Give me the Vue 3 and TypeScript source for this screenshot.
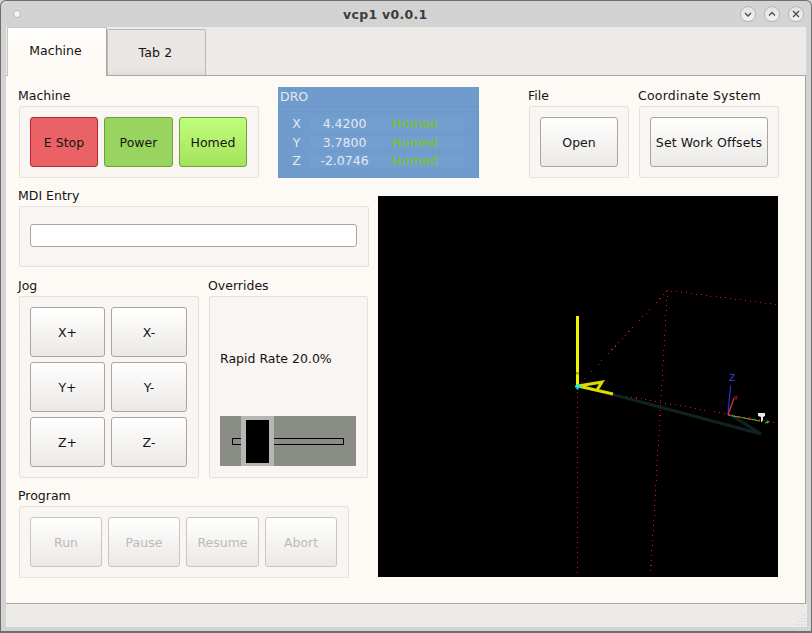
<template>
  <div class="window">
    <header class="titlebar">
      <span class="menu-dot"></span>
      <span class="title">vcp1 v0.0.1</span>
      <div class="wm-buttons">
        <span class="wm-btn">
          <svg width="10" height="10" viewBox="0 0 10 10"><path d="M2 4l3 3 3-3" /></svg>
        </span>
        <span class="wm-btn">
          <svg width="10" height="10" viewBox="0 0 10 10"><path d="M2 6.5l3-3 3 3" /></svg>
        </span>
        <span class="wm-btn">
          <svg width="10" height="10" viewBox="0 0 10 10"><path d="M2 2l6 6M8 2l-6 6" /></svg>
        </span>
      </div>
    </header>

    <div class="tabbar">
      <div class="tab active">Machine</div>
      <div class="tab">Tab 2</div>
    </div>

    <main class="pane">
      <div class="top-row">
        <section class="group machine-group">
          <div class="group-label">Machine</div>
          <div class="box btn-row machine-btns">
            <button class="btn estop">E Stop</button>
            <button class="btn power">Power</button>
            <button class="btn homed">Homed</button>
          </div>
        </section>

        <section class="dro">
          <div class="dro-title">DRO</div>
          <div class="dro-body">
            <div v-for="axis in axes" :key="axis.name" class="dro-row">
              <span class="dro-axis">{{ axis.name }}</span>
              <span class="dro-value">{{ axis.value }}</span>
              <span class="dro-state">Homed</span>
            </div>
          </div>
        </section>

        <section class="group file-group">
          <div class="group-label">File</div>
          <div class="box btn-row">
            <button class="btn">Open</button>
          </div>
        </section>

        <section class="group coord-group">
          <div class="group-label wide-text">Coordinate System</div>
          <div class="box btn-row">
            <button class="btn offsets">Set Work Offsets</button>
          </div>
        </section>
      </div>

      <div class="main-row">
        <div class="left-col">
          <section class="group">
            <div class="group-label">MDI Entry</div>
            <div class="box mdi-box">
              <input class="mdi-input" type="text" />
            </div>
          </section>

          <div class="jog-row">
            <section class="group jog-group">
              <div class="group-label">Jog</div>
              <div class="box jog-grid">
                <button v-for="j in jogButtons" :key="j" class="btn">{{ j }}</button>
              </div>
            </section>

            <section class="group override-group">
              <div class="group-label">Overrides</div>
              <div class="box override-box">
                <div class="rate-label">Rapid Rate {{ rapidRate.toFixed(1) }}%</div>
                <div class="slider">
                  <div class="slider-track"></div>
                  <div class="slider-handle" :style="{ left: handleLeft + 'px' }">
                    <div class="slider-knob"></div>
                  </div>
                </div>
              </div>
            </section>
          </div>

          <section class="group program-group">
            <div class="group-label">Program</div>
            <div class="box btn-row program-btns">
              <button v-for="p in programButtons" :key="p" class="btn" disabled>{{ p }}</button>
            </div>
          </section>
        </div>

        <div class="viewport">
          <svg width="400" height="381" viewBox="0 0 400 381">
            <!-- machine limits -->
            <g class="dots">
              <path d="M199.5 190.5L289.5 94.5L398 108.5" />
              <path d="M289.5 94.5L272.5 378" />
              <path d="M199.5 190.5V379" />
              <path d="M233 197.5L397 226.5" />
            </g>
            <!-- tool path shadow -->
            <path d="M233 198L383 238L353 219" fill="none" stroke="#0f2322" stroke-width="3" />
            <!-- program -->
            <path d="M199.5 120V191" fill="none" stroke="#f2f200" stroke-width="3" />
            <path d="M198 176H201V178.5H198Z" fill="#a8a800" />
            <path d="M200 190L224 186L219 194M200 190L235 198" fill="none" stroke="#dcdc00" stroke-width="3" />
            <path d="M197 190.5H204M199.5 188V193.5" stroke="#19e8e8" stroke-width="2" />
            <!-- axes widget -->
            <path d="M352.5 190L350 219" stroke="#3030e0" stroke-width="1.2" fill="none" />
            <path d="M350 219L356 202" stroke="#e03838" stroke-width="1.2" fill="none" />
            <path d="M350 219L382 225" stroke="#30d830" stroke-width="1.2" fill="none" />
            <path d="M350 219L382 225" stroke="#e02020" stroke-width="1.2" stroke-dasharray="4 6" fill="none" />
            <text x="351" y="185" class="axis-z">Z</text>
            <text x="356" y="204" class="axis-y">Y</text>
            <path d="M380 217h7v3l-2 1v3l-1 2h-1v-5l-3-1z" fill="#e8e8e8" />
            <path d="M387 227l4-1.5M389 224.5l1 3" stroke="#30d830" stroke-width="1" />
          </svg>
        </div>
      </div>
    </main>

    <footer class="statusbar">
      <svg class="grip" width="10" height="10" viewBox="0 0 10 10">
        <path d="M9 0h1v1H9zM6 3h1v1H6zM9 3h1v1H9zM3 6h1v1H3zM6 6h1v1H6zM9 6h1v1H9zM0 9h1v1H0zM3 9h1v1H3zM6 9h1v1H6zM9 9h1v1H9z" fill="#c9c5c0" />
      </svg>
    </footer>
  </div>
</template>

<script setup lang="ts">
import { computed, ref } from 'vue';

const axes = [
  { name: 'X', value: '4.4200' },
  { name: 'Y', value: '3.7800' },
  { name: 'Z', value: '-2.0746' },
];

const jogButtons = ['X+', 'X-', 'Y+', 'Y-', 'Z+', 'Z-'];
const programButtons = ['Run', 'Pause', 'Resume', 'Abort'];

const rapidRate = ref(20);

// slider is 136 wide, handle is 33
const handleLeft = computed(() => Math.round(((136 - 33) * rapidRate.value) / 100));
</script>

<style>
html,
body {
  margin: 0;
  background: #d3d3d3;
}
</style>

<style scoped>
.window {
  box-sizing: border-box;
  width: 812px;
  height: 633px;
  display: flex;
  flex-direction: column;
  background: #d3d3d3;
  border: 1px solid #6e6e6e;
  border-bottom-width: 2px;
  border-radius: 6px 6px 0 0;
  padding: 0 5px 4px;
  font-family: "DejaVu Sans", sans-serif;
  font-size: 12.5px;
  color: #141414;
  overflow: hidden;
}

.titlebar {
  height: 26px;
  flex: none;
  display: flex;
  align-items: center;
  position: relative;
  margin: 0 -5px;
}

.menu-dot {
  width: 6px;
  height: 6px;
  margin-left: 12px;
  border-radius: 50%;
  background: #f4f4f4;
  border: 1px solid #b8b8b8;
}

.title {
  position: absolute;
  left: 342px;
  top: 6px;
  font-size: 12.5px;
  font-weight: bold;
  letter-spacing: 0.3px;
  color: #3c3c3c;
}

.wm-buttons {
  margin-left: auto;
  margin-right: 7px;
  display: flex;
  gap: 8px;
}

.wm-btn {
  box-sizing: border-box;
  width: 16px;
  height: 16px;
  border-radius: 50%;
  background: linear-gradient(#e2e2e2, #f2f2f2);
  border: 1px solid #b4b4b4;
  display: flex;
  align-items: center;
  justify-content: center;
}

.wm-btn path {
  fill: none;
  stroke: #4a4a4a;
  stroke-width: 1.3;
}

.tabbar {
  height: 48px;
  flex: none;
  display: flex;
  align-items: flex-end;
  background: #edebe7;
  border-bottom: 1px solid #aaa6a2;
  box-sizing: content-box;
}

.tab {
  box-sizing: border-box;
  width: 99px;
  height: 46px;
  display: flex;
  align-items: center;
  justify-content: center;
  background: linear-gradient(#e9e6e3 85%, #e0dedb);
  border: 1px solid #bdb9b5;
  border-bottom: none;
  border-radius: 2px 2px 0 0;
  padding-right: 2px;
  letter-spacing: 0.15px;
}

.tab.active {
  width: 100px;
  height: 49px;
  margin-left: 1px;
  margin-bottom: -1px;
  padding: 0 3px 3px 0;
  letter-spacing: 0;
  background: linear-gradient(#ffffff, #fdf9f5 50%);
  border-color: #c8c4c0;
  border-right-color: #aaa6a2;
  position: relative;
}

.pane {
  flex: 1;
  min-height: 0;
  background: #fdf9f5;
  border-right: 1px solid #aaa6a2;
  border-bottom: 1px solid #aaa6a2;
  padding: 11px 0 0 13px;
}

.top-row {
  display: flex;
  height: 91px;
}

.group {
  display: flex;
  flex-direction: column;
}

.group-label {
  height: 19px;
  line-height: 17px;
  margin-left: -1px;
  white-space: nowrap;
}

.wide-text {
  letter-spacing: 0.22px;
}

.box {
  box-sizing: border-box;
  background: #f8f5f2;
  border: 1px solid #e4e0dc;
  border-radius: 2px;
}

.btn-row {
  flex: 1;
  display: grid;
  grid-auto-flow: column;
  grid-auto-columns: 1fr;
  gap: 6px;
  padding: 10px;
}

.machine-btns {
  grid-template-columns: 68px 69px 68px;
}

.program-btns {
  grid-template-columns: 72px 72px 73px 72px;
}

.btn {
  min-width: 0;
  height: 50px;
  padding: 0;
  font: inherit;
  color: #141414;
  white-space: nowrap;
  background: linear-gradient(#ffffff, #ebe9e6);
  border: 1px solid #a9a6a2;
  border-radius: 3px;
}

.btn:disabled {
  color: #bdbab6;
  border-color: #cac6c2;
}

.btn.offsets {
  letter-spacing: 0.12px;
}

.btn.estop {
  background: #ea6265;
  border-color: #b7282c;
}

.btn.power {
  background: #98d45f;
  border-color: #6ba332;
}

.btn.homed {
  background: linear-gradient(#bffe7c, #a5e25c);
  border-color: #6ea535;
}

.machine-group {
  width: 240px;
}

.dro {
  width: 201px;
  margin-left: 19px;
  background: #6f9ccd;
  color: #e4e9f0;
  display: flex;
  flex-direction: column;
}

.dro-title {
  height: 19px;
  line-height: 19px;
  padding-left: 2px;
}

.dro-body {
  flex: 1;
  border: 1px solid #6b95c4;
  padding: 10px 11px 0 2px;
  box-sizing: border-box;
}

.dro-row {
  display: grid;
  grid-template-columns: 28px 75px 79px;
  column-gap: 1px;
  height: 13px;
  line-height: 13px;
  margin-bottom: 5px;
  text-align: center;
}

.dro-row:first-child {
  margin-bottom: 6px;
}

.dro-axis {
  padding-left: 3px;
}

.dro-value,
.dro-state {
  background: #739fd0;
}

.dro-value {
  padding-right: 6px;
  box-sizing: border-box;
}

.dro-state {
  color: #7fc41c;
  text-align: left;
  padding-left: 6px;
  letter-spacing: 0.2px;
}

.file-group {
  width: 100px;
  margin-left: 50px;
}

.coord-group {
  width: 140px;
  margin-left: 10px;
}

.main-row {
  display: flex;
  margin-top: 9px;
}

.left-col {
  width: 350px;
  flex: none;
}

.mdi-box {
  height: 61px;
  padding: 17px 11px 0 10px;
}

.mdi-input {
  display: block;
  box-sizing: border-box;
  width: 100%;
  height: 23px;
  background: #fff;
  border: 1px solid #a9a6a2;
  border-radius: 3px;
  padding: 0;
}

.jog-row {
  display: flex;
  gap: 10px;
  margin-top: 10px;
}

.jog-group {
  width: 180px;
}

.jog-grid {
  display: grid;
  grid-template-columns: 75px 76px;
  grid-auto-rows: 50px;
  gap: 5px 6px;
  padding: 10px;
  height: 182px;
}

.override-group {
  width: 159px;
}

.override-box {
  height: 182px;
  padding: 10px 11px 11px 10px;
  display: flex;
  flex-direction: column;
}

.rate-label {
  flex: 1;
  display: flex;
  align-items: center;
  padding-bottom: 6px;
}

.slider {
  position: relative;
  height: 50px;
  flex: none;
  background: #8a8c86;
}

.slider-track {
  position: absolute;
  left: 12px;
  right: 12px;
  top: 22px;
  height: 7px;
  box-sizing: border-box;
  border: 1px solid #000;
}

.slider-handle {
  position: absolute;
  top: 0;
  width: 33px;
  height: 50px;
  background: #b5b8b2;
}

.slider-knob {
  position: absolute;
  left: 5px;
  top: 4px;
  width: 23px;
  height: 43px;
  background: #000;
}

.program-group {
  width: 330px;
  margin-top: 9px;
  height: 91px;
}

.viewport {
  width: 400px;
  height: 381px;
  margin: 9px 0 0 9px;
  background: #000;
  flex: none;
}

.viewport svg {
  display: block;
}

.dots path {
  fill: none;
  stroke: #d81414;
  stroke-width: 1;
  stroke-dasharray: 1 4;
  shape-rendering: crispEdges;
}

.axis-z {
  font-size: 9px;
  fill: #3c3cf0;
}

.axis-y {
  font-size: 6px;
  fill: #e03838;
}

.statusbar {
  height: 23px;
  flex: none;
  background: #edebe7;
  margin-right: -1px;
  position: relative;
}

.grip {
  position: absolute;
  right: 2px;
  bottom: 2px;
}
</style>
